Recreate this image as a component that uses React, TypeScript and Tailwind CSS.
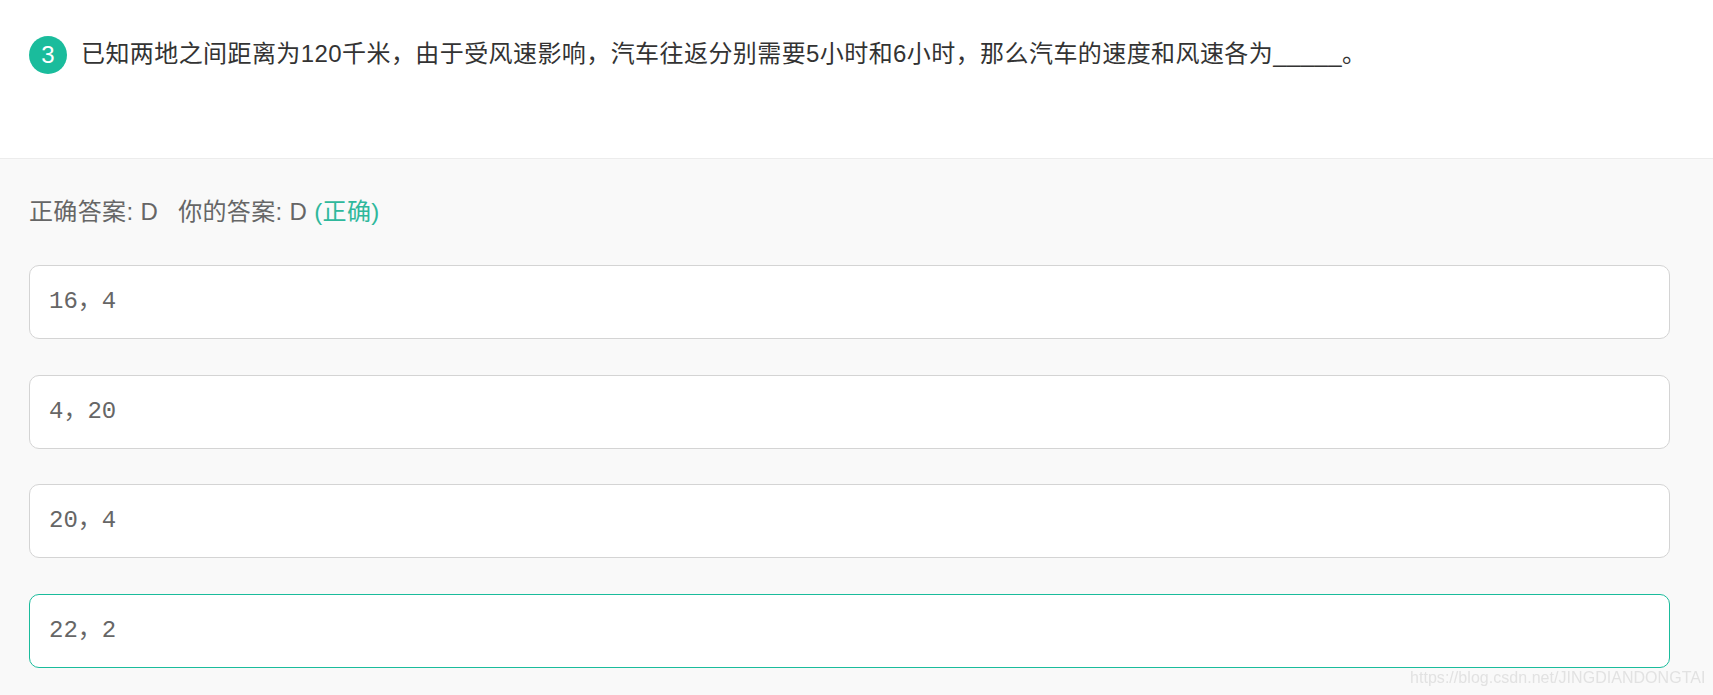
const options = [
  { text: '16，4' },
  { text: '4，20' },
  { text: '20，4' },
  { text: '22，2', correct: true },
]

export default function App() {
  return (
    <div className="relative h-[695px] w-full overflow-hidden bg-[#f9f9f9] font-['Liberation_Sans','Noto_Sans_CJK_SC',sans-serif]">
      {/* Question */}
      <div className="flex h-[159px] items-start gap-[14px] border-b border-[#ececec] bg-white pl-[29px] pt-[36px]">
        <span className="flex h-[38px] w-[38px] items-center justify-center rounded-full bg-[#1abc9c] text-[24px] text-white">
          3
        </span>
        <p className="text-[24px] leading-[36px] tracking-[0.42px] text-[#333]">
          已知两地之间距离为120千米，由于受风速影响，汽车往返分别需要5小时和6小时，那么汽车的速度和风速各为_____。
        </p>
      </div>

      {/* Answers */}
      <div className="pl-[29px] pr-[43px] pt-[35px]">
        <p className="text-[24px] leading-[36px] tracking-[0.35px] text-[#666]">
          正确答案: D<span className="ml-[20px]">你的答案: D</span>{' '}
          <span className="text-[#2fb89c]">(正确)</span>
        </p>

        <div className="mt-[35px] flex flex-col gap-[35.5px]">
          {options.map((o) => (
            <div
              key={o.text}
              className={`flex h-[74px] items-center rounded-[10px] border bg-white px-[19px] font-['Liberation_Mono','Noto_Sans_CJK_SC',monospace] text-[24px] text-[#666] ${
                o.correct ? 'border-[#1abc9c]' : 'border-[#d4d4d4]'
              }`}
            >
              {o.text}
            </div>
          ))}
        </div>
      </div>

      {/* Watermark */}
      <span className="absolute left-[1410px] top-[667px] text-[16px] leading-[22px] tracking-[0.04px] whitespace-nowrap text-[#e2e2e2] blur-[0.4px]">
        https://blog.csdn.net/JINGDIANDONGTAI
      </span>
    </div>
  )
}
